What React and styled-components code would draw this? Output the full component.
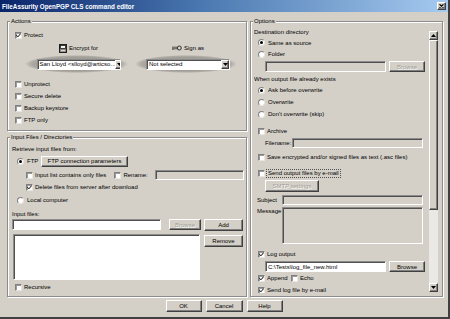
import React from "react";
import styled, { createGlobalStyle, css } from "styled-components";

const Global = createGlobalStyle`
  html, body { margin: 0; padding: 0; background: #d4d0c8; }
  body { font-family: "Liberation Sans", Arial, sans-serif; font-size: 6px; color: #000; }
  * { box-sizing: border-box; }
`;

const raised = css`
  border: 1px solid;
  border-color: #ffffff #404040 #404040 #ffffff;
  box-shadow: inset -1px -1px 0 #808080;
`;

const sunken = css`
  border: 1px solid;
  border-color: #8c8c8c #ffffff #ffffff #8c8c8c;
  box-shadow: inset 1px 1px 0 #505050;
`;

const Window = styled.div`
  width: 450px;
  height: 319px;
  background: #d4d0c8;
  display: flex;
  flex-direction: column;
  border-right: 2px solid #404040;
  border-bottom: 2px solid #404040;
  overflow: hidden;
`;

const TitleBar = styled.div`
  height: 12px;
  flex-shrink: 0;
  display: flex;
  align-items: center;
  justify-content: space-between;
  padding: 0 2px 0 2px;
  background: linear-gradient(90deg, #0a246a 0%, #4a78b0 45%, #a6caf0 100%);
`;

const Title = styled.span`
  color: #fff;
  font-weight: bold;
  font-size: 6.3px;
  white-space: nowrap;
`;

const CloseButton = styled.div`
  ${raised};
  width: 9px;
  height: 8px;
  background: #d4d0c8;
  display: flex;
  align-items: center;
  justify-content: center;
`;

const Main = styled.div`
  display: flex;
  gap: 3px;
  padding: 9px 0 0 7px;
`;

const LeftCol = styled.div`
  width: 240px;
  display: flex;
  flex-direction: column;
  gap: 6px;
`;

const Group = styled.div`
  position: relative;
  border: 1px solid #8c8c8c;
  box-shadow: inset 1px 1px 0 #fff, 1px 1px 0 #fff;
  height: ${(p) => p.$h}px;
  width: ${(p) => p.$w}px;
  padding: ${(p) => p.$pad};
  display: flex;
  flex-direction: column;
`;

const Caption = styled.span`
  position: absolute;
  top: -5px;
  left: 2px;
  height: 8px;
  line-height: 8px;
  padding: 0 1px;
  background: #d4d0c8;
  white-space: nowrap;
`;

const Row = styled.div`
  display: flex;
  align-items: ${(p) => p.$align ?? "center"};
  gap: ${(p) => p.$gap ?? 2}px;
  height: ${(p) => p.$h ?? 12}px;
  margin-top: ${(p) => p.$mt ?? 0}px;
  padding-left: ${(p) => p.$pl ?? 0}px;
  white-space: nowrap;
  flex-shrink: 0;
`;

const Text = styled.span`
  white-space: nowrap;
  line-height: 8px;
  margin-left: ${(p) => p.$ml ?? 0}px;
  width: ${(p) => (p.$w ? `${p.$w}px` : "auto")};
  flex-shrink: 0;
`;

const Focus = styled.span`
  white-space: nowrap;
  line-height: 7px;
  outline: 1px dotted #505050;
  padding: 0 1px;
`;

const Box = styled.span`
  width: 7px;
  height: 7px;
  flex-shrink: 0;
  background: #fff;
  border: 1px solid;
  border-color: #808080 #e8e6e2 #e8e6e2 #808080;
  box-shadow: inset 1px 1px 0 #9a9a9a;
  display: flex;
  align-items: center;
  justify-content: center;
  margin-left: ${(p) => p.$ml ?? 0}px;
`;

const RadioCircle = styled.span`
  width: 7px;
  height: 7px;
  flex-shrink: 0;
  border-radius: 50%;
  background: #fff;
  border: 1px solid #808080;
  border-right-color: #e8e6e2;
  border-bottom-color: #e8e6e2;
  display: flex;
  align-items: center;
  justify-content: center;
`;

const Dot = styled.span`
  width: 3px;
  height: 3px;
  border-radius: 50%;
  background: #000;
`;

const Field = styled.div`
  ${sunken};
  height: ${(p) => p.$h ?? 11}px;
  width: ${(p) => (p.$w ? `${p.$w}px` : "auto")};
  flex: ${(p) => (p.$w ? "none" : "1")};
  margin-left: ${(p) => p.$ml ?? 0}px;
  background: ${(p) => (p.$disabled ? "#d4d0c8" : "#fff")};
  display: flex;
  align-items: center;
  padding-left: 2px;
  overflow: hidden;
  white-space: nowrap;
`;

const Button = styled.div`
  ${raised};
  height: ${(p) => p.$h ?? 12}px;
  width: ${(p) => p.$w}px;
  margin-left: ${(p) => p.$ml ?? 0}px;
  margin-top: ${(p) => p.$mt ?? 0}px;
  flex-shrink: 0;
  background: #d4d0c8;
  display: flex;
  align-items: center;
  justify-content: center;
  white-space: nowrap;
  color: ${(p) => (p.$disabled ? "#a09c96" : "#000")};
  text-shadow: ${(p) => (p.$disabled ? "0.6px 0.6px 0 #fff" : "none")};
`;

const ComboGrid = styled.div`
  display: grid;
  grid-template-columns: 103px 102px;
  column-gap: 7px;
  margin: 1px 0 0 10px;
`;

const ComboCol = styled.div`
  display: flex;
  flex-direction: column;
  align-items: center;
`;

const ColHead = styled.div`
  height: 12px;
  display: flex;
  align-items: center;
  gap: 2px;
  padding-left: ${(p) => p.$pl ?? 0}px;
`;

const Oval = styled.div`
  width: 100%;
  height: 18px;
  margin-top: 1px;
  display: flex;
  align-items: center;
  justify-content: center;
  background: radial-gradient(
    ellipse closest-side at 50% 50%,
    #a7a39d 0%,
    #a09c96 72%,
    #aeaaa4 88%,
    rgba(212, 208, 200, 0) 100%
  );
`;

const Combo = styled.div`
  ${sunken};
  width: 84px;
  height: 11px;
  margin-left: ${(p) => p.$ml ?? 0}px;
  background: #fff;
  display: flex;
  align-items: center;
  padding-left: 2px;
  white-space: nowrap;
  overflow: hidden;
`;

const ComboArrow = styled.span`
  ${raised};
  margin-left: auto;
  width: 8px;
  height: 9px;
  flex-shrink: 0;
  background: #d4d0c8;
  display: flex;
  align-items: center;
  justify-content: center;
`;

const CheckList = styled.div`
  display: flex;
  flex-direction: column;
  margin-top: 5px;
`;

const FileGrid = styled.div`
  display: grid;
  grid-template-columns: 188px 39px;
  grid-template-rows: 11px 46px;
  column-gap: 4px;
  row-gap: 4px;
`;

const ListBox = styled.div`
  ${sunken};
  background: #fff;
  margin-left: 1px;
  height: 46px;
`;

const OptionsBox = styled(Group)`
  flex-direction: row;
`;

const OptContent = styled.div`
  flex: 1;
  height: 266px;
  overflow: hidden;
  display: flex;
  flex-direction: column;
`;

const ScrollBar = styled.div`
  width: 9px;
  height: 261px;
  margin: 4px 0 0 1px;
  display: flex;
  flex-direction: column;
  background: #ebe9e5;
`;

const ScrollBtn = styled.div`
  ${raised};
  height: 9px;
  background: #d4d0c8;
  display: flex;
  align-items: center;
  justify-content: center;
`;

const Thumb = styled.div`
  ${raised};
  height: 170px;
  background: #d4d0c8;
`;

const Track = styled.div`
  flex: 1;
`;

const MessageLabel = styled.span`
  line-height: 8px;
  width: 25px;
  flex-shrink: 0;
`;

const Footer = styled.div`
  display: flex;
  justify-content: center;
  gap: 4px;
  padding-top: 3px;
`;

const Check = () => (
  <svg width="5" height="5" viewBox="0 0 5 5">
    <path d="M0.4 2.2 L1.9 3.8 L4.6 0.7" fill="none" stroke="#000" strokeWidth="1" />
  </svg>
);

const DownArrow = () => (
  <svg width="5" height="3" viewBox="0 0 5 3">
    <path d="M0 0 H5 L2.5 3 Z" fill="#000" />
  </svg>
);

const UpArrow = () => (
  <svg width="5" height="3" viewBox="0 0 5 3">
    <path d="M0 3 H5 L2.5 0 Z" fill="#000" />
  </svg>
);

const CheckItem = ({ checked, children, pl, mt, h }) => (
  <Row $pl={pl} $mt={mt} $h={h}>
    <Box>{checked && <Check />}</Box>
    {typeof children === "string" ? <Text>{children}</Text> : children}
  </Row>
);

const RadioItem = ({ selected, children, pl, mt, h }) => (
  <Row $pl={pl} $mt={mt} $h={h} $gap={3}>
    <RadioCircle>{selected && <Dot />}</RadioCircle>
    <Text>{children}</Text>
  </Row>
);

const EncryptIcon = () => (
  <svg width="8" height="9" viewBox="0 0 8 9">
    <rect x="0.5" y="0.5" width="7" height="8" fill="#8a8680" stroke="#202020" />
    <rect x="1.5" y="1.5" width="5" height="3" fill="#f4f4f4" stroke="#202020" strokeWidth="0.8" />
    <rect x="2" y="6" width="4" height="1.2" fill="#d8d8d8" />
  </svg>
);

const SignIcon = () => (
  <svg width="10" height="6" viewBox="0 0 10 6">
    <path d="M0 2.2 H5 M0 3.8 H5 M1 3.8 V5" stroke="#303030" strokeWidth="0.8" fill="none" />
    <circle cx="7.3" cy="3" r="2" fill="none" stroke="#303030" strokeWidth="1" />
  </svg>
);

export default function App() {
  return (
    <>
      <Global />
      <Window>
        <TitleBar>
          <Title>FileAssurity OpenPGP CLS command editor</Title>
          <CloseButton>
            <svg width="5" height="4" viewBox="0 0 5 4">
              <path d="M0.5 0.3 L4.5 3.7 M4.5 0.3 L0.5 3.7" stroke="#000" strokeWidth="1.1" />
            </svg>
          </CloseButton>
        </TitleBar>

        <Main>
          <LeftCol>
            <Group $h={110} $pad="7px 0 0 7px">
              <Caption>Actions</Caption>
              <CheckItem checked>Protect</CheckItem>
              <ComboGrid>
                <ComboCol>
                  <ColHead $pl={4}>
                    <EncryptIcon />
                    <Text>Encrypt for</Text>
                  </ColHead>
                  <Oval>
                    <Combo $ml={4}>
                      San Lloyd &lt;slloyd@articso...
                      <ComboArrow>
                        <DownArrow />
                      </ComboArrow>
                    </Combo>
                  </Oval>
                </ComboCol>
                <ComboCol>
                  <ColHead $pl={4}>
                    <SignIcon />
                    <Text>Sign as</Text>
                  </ColHead>
                  <Oval>
                    <Combo $ml={4}>
                      Not selected
                      <ComboArrow>
                        <DownArrow />
                      </ComboArrow>
                    </Combo>
                  </Oval>
                </ComboCol>
              </ComboGrid>
              <CheckList>
                <CheckItem>Unprotect</CheckItem>
                <CheckItem>Secure delete</CheckItem>
                <CheckItem>Backup keystore</CheckItem>
                <CheckItem>FTP only</CheckItem>
              </CheckList>
            </Group>

            <Group $h={160} $pad="5px 2px 0 4px">
              <Caption>Input Files / Directories</Caption>
              <Row>
                <Text>Retrieve input files from:</Text>
              </Row>
              <Row $pl={5} $gap={3}>
                <RadioCircle>
                  <Dot />
                </RadioCircle>
                <Text $w={11}>FTP</Text>
                <Button $w={87} $h={11}>
                  FTP connection parameters
                </Button>
              </Row>
              <Row $pl={14} $mt={2}>
                <Box />
                <Text>Input list contains only files</Text>
                <Box $ml={6} />
                <Text>Rename:</Text>
                <Field $h={10} $ml={5} $disabled />
              </Row>
              <CheckItem checked pl={14}>
                Delete files from server after download
              </CheckItem>
              <RadioItem pl={5} mt={1}>
                Local computer
              </RadioItem>
              <Row $h={11} $mt={2}>
                <Text>Input files:</Text>
              </Row>
              <FileGrid>
                <Row $h={11} $gap={8}>
                  <Field $w={149} />
                  <Button $w={32} $h={11} $disabled>
                    Browse
                  </Button>
                </Row>
                <Button $w={39}>Add</Button>
                <ListBox />
                <Button $w={39} $mt={1}>
                  Remove
                </Button>
              </FileGrid>
              <CheckItem pl={3} mt={1}>
                Recursive
              </CheckItem>
            </Group>
          </LeftCol>

          <OptionsBox $h={276} $w={193} $pad="5px 4px 3px 3px">
            <Caption>Options</Caption>
            <OptContent>
              <Row $h={10}>
                <Text>Destination directory</Text>
              </Row>
              <RadioItem selected pl={4} h={11}>
                Same as source
              </RadioItem>
              <RadioItem pl={4}>Folder</RadioItem>
              <Row $h={11} $mt={1} $pl={11} $gap={3}>
                <Field $w={121} $disabled />
                <Button $w={36} $h={11} $disabled>
                  Browse
                </Button>
              </Row>
              <Row $h={10} $mt={2}>
                <Text>When output file already exists</Text>
              </Row>
              <RadioItem selected pl={4}>
                Ask before overwrite
              </RadioItem>
              <RadioItem pl={4}>Overwrite</RadioItem>
              <RadioItem pl={4}>Don't overwrite (skip)</RadioItem>
              <CheckItem pl={4} mt={5}>
                Archive
              </CheckItem>
              <Row $h={11} $pl={11} $gap={0}>
                <Text $w={27}>Filename:</Text>
                <Field $w={131} $h={10} $disabled />
              </Row>
              <CheckItem pl={4} mt={3}>
                Save encrypted and/or signed files as text (.asc files)
              </CheckItem>
              <CheckItem pl={4} mt={4}>
                <Focus>Send output files by e-mail</Focus>
              </CheckItem>
              <Row $h={12} $mt={1} $pl={11}>
                <Button $w={54} $disabled>
                  SMTP settings
                </Button>
              </Row>
              <Row $h={10} $mt={3} $pl={3} $gap={0}>
                <Text $w={25}>Subject</Text>
                <Field $w={141} $h={10} $disabled />
              </Row>
              <Row $h={37} $mt={2} $pl={3} $gap={0} $align="flex-start">
                <MessageLabel>Message</MessageLabel>
                <Field $w={141} $h={37} $disabled />
              </Row>
              <CheckItem checked pl={4} mt={4}>
                Log output
              </CheckItem>
              <Row $h={11} $mt={1} $pl={11} $gap={3}>
                <Field $w={121}>C:\Tests\log_file_new.html</Field>
                <Button $w={36} $h={11}>
                  Browse
                </Button>
              </Row>
              <Row $pl={4}>
                <Box>
                  <Check />
                </Box>
                <Text $w={22}>Append</Text>
                <Box />
                <Text>Echo</Text>
              </Row>
              <CheckItem checked pl={4}>
                Send log file by e-mail
              </CheckItem>
            </OptContent>
            <ScrollBar>
              <ScrollBtn>
                <UpArrow />
              </ScrollBtn>
              <Thumb />
              <Track />
              <ScrollBtn>
                <DownArrow />
              </ScrollBtn>
            </ScrollBar>
          </OptionsBox>
        </Main>

        <Footer>
          <Button $w={36}>OK</Button>
          <Button $w={37}>Cancel</Button>
          <Button $w={36}>Help</Button>
        </Footer>
      </Window>
    </>
  );
}
